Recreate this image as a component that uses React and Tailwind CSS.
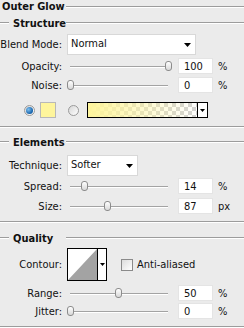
import React from 'react';

const font = "font-['DejaVu_Sans_Condensed','DejaVu_Sans','Liberation_Sans',sans-serif]";

function Groove({ className = '' }) {
  return <div className={`h-0 border-t border-b border-t-[#9c9c9c] border-b-white ${className}`} />;
}

function Heading({ children, className = '' }) {
  return (
    <div className={`flex items-center h-[12px] ${className}`}>
      <Groove className="w-[9px]" />
      <div className="w-[57px] pl-[4px] font-bold text-[11px] leading-none">{children}</div>
      <Groove className="flex-1" />
    </div>
  );
}

function Arrow() {
  return (
    <svg width="7" height="4" viewBox="0 0 7 4">
      <polygon points="0,0 7,0 3.5,4" fill="#000" />
    </svg>
  );
}

function Label({ children }) {
  return <div className="w-[62px] shrink-0 text-right text-[11px] leading-none">{children}</div>;
}

function Slider({ pos }) {
  return (
    <div className="relative w-[104px] h-[16px]">
      <div className="absolute left-[3px] right-[3px] top-[8px] h-0 border-t border-b border-t-[#a3a3a3] border-b-white" />
      <div
        className="absolute top-[3px] w-[7px] h-[10px] rounded-[3px] border border-[#8c8c8c] bg-gradient-to-b from-white to-[#d8d8d8]"
        style={{ left: pos - 3 }}
      />
    </div>
  );
}

function Field({ value }) {
  return (
    <div className="w-[35px] h-[16px] bg-white border border-[#e4e4e4] pl-[5px] flex items-center text-[11px] leading-none">
      {value}
    </div>
  );
}

function SliderRow({ label, pos, value, unit, className = '' }) {
  return (
    <div className={`flex items-center h-[16px] ${className}`}>
      <Label>{label}</Label>
      <div className="ml-[5px]"><Slider pos={pos} /></div>
      <div className="ml-[7px]"><Field value={value} /></div>
      <div className="ml-[5px] text-[11px] leading-none">{unit}</div>
    </div>
  );
}

function Radio({ checked }) {
  return (
    <div className="w-[11px] h-[11px] rounded-full border border-[#9a9a9a] bg-gradient-to-br from-[#d6d6d6] to-white flex items-center justify-center">
      {checked && (
        <div className="w-[7px] h-[7px] rounded-full bg-[radial-gradient(circle_at_35%_35%,#7ec0f0,#1460a8_70%)]" />
      )}
    </div>
  );
}

export default function App() {
  return (
    <div className={`w-[244px] h-[328px] bg-[#ebebeb] text-[#111] overflow-hidden ${font}`}>
      {/* title */}
      <div className="flex items-center h-[13px]">
        <div className="w-[66px] pl-[2px] font-bold text-[11px] leading-none">Outer Glow</div>
        <Groove className="flex-1" />
      </div>

      <Heading className="mt-[4px]">Structure</Heading>

      <div className="flex items-center h-[21px] mt-[5px]">
        <Label>Blend Mode:</Label>
        <div className="ml-[5px] w-[129px] h-[21px] bg-white border border-[#d8d8d8] flex items-center justify-between pl-[3px] pr-[4px] text-[11px]">
          <span>Normal</span>
          <Arrow />
        </div>
      </div>

      <SliderRow label="Opacity:" pos={101} value="100" unit="%" className="mt-[3px]" />
      <SliderRow label="Noise:" pos={3} value="0" unit="%" className="mt-[3px]" />

      {/* colour row */}
      <div className="flex items-center h-[16px] mt-[9px] pl-[24px]">
        <Radio checked />
        <div className="ml-[5px] w-[16px] h-[16px] bg-[#fef59c] border border-[#b8b8b8]" />
        <div className="ml-[12px]"><Radio /></div>
        <div className="ml-[8px] w-[121px] h-[16px] border border-black flex">
          <div className="flex-1 bg-[repeating-conic-gradient(#d2d2d2_0%_25%,#ffffff_0%_50%)] bg-[length:8px_8px]">
            <div className="w-full h-full bg-gradient-to-r from-[#fef59c] to-transparent" />
          </div>
          <div className="w-[10px] bg-white border-l border-black flex items-center justify-center">
            <svg width="5" height="3" viewBox="0 0 5 3"><polygon points="0,0 5,0 2.5,3" fill="#000" /></svg>
          </div>
        </div>
      </div>

      <Groove className="mt-[8px]" />

      <Heading className="mt-[8px]">Elements</Heading>

      <div className="flex items-center h-[21px] mt-[7px]">
        <Label>Technique:</Label>
        <div className="ml-[5px] w-[71px] h-[21px] bg-white border border-[#d8d8d8] flex items-center justify-between pl-[3px] pr-[4px] text-[11px]">
          <span>Softer</span>
          <Arrow />
        </div>
      </div>

      <SliderRow label="Spread:" pos={17} value="14" unit="%" className="mt-[2px]" />
      <SliderRow label="Size:" pos={40} value="87" unit="px" className="mt-[4px]" />

      <Groove className="mt-[7px]" />

      <Heading className="mt-[9px]">Quality</Heading>

      <div className="flex items-center h-[33px] mt-[4px]">
        <Label>Contour:</Label>
        <div className="ml-[5px] w-[40px] h-[33px] border border-black flex bg-white">
          <svg width="29" height="31" viewBox="0 0 29 31" className="shrink-0">
            <polygon points="0,31 29,0 29,31" fill="#a3a3a3" />
          </svg>
          <div className="flex-1 border-l border-black flex items-center justify-center">
            <svg width="5" height="3" viewBox="0 0 5 3"><polygon points="0,0 5,0 2.5,3" fill="#000" /></svg>
          </div>
        </div>
        <div className="ml-[14px] w-[12px] h-[12px] border border-[#8a8a8a] bg-gradient-to-br from-[#dcdcdc] to-white" />
        <div className="ml-[4px] text-[11px] leading-none">Anti-aliased</div>
      </div>

      <SliderRow label="Range:" pos={51} value="50" unit="%" className="mt-[4px]" />
      <SliderRow label="Jitter:" pos={3} value="0" unit="%" className="mt-[2px]" />

      <Groove className="mt-[7px]" />
    </div>
  );
}
